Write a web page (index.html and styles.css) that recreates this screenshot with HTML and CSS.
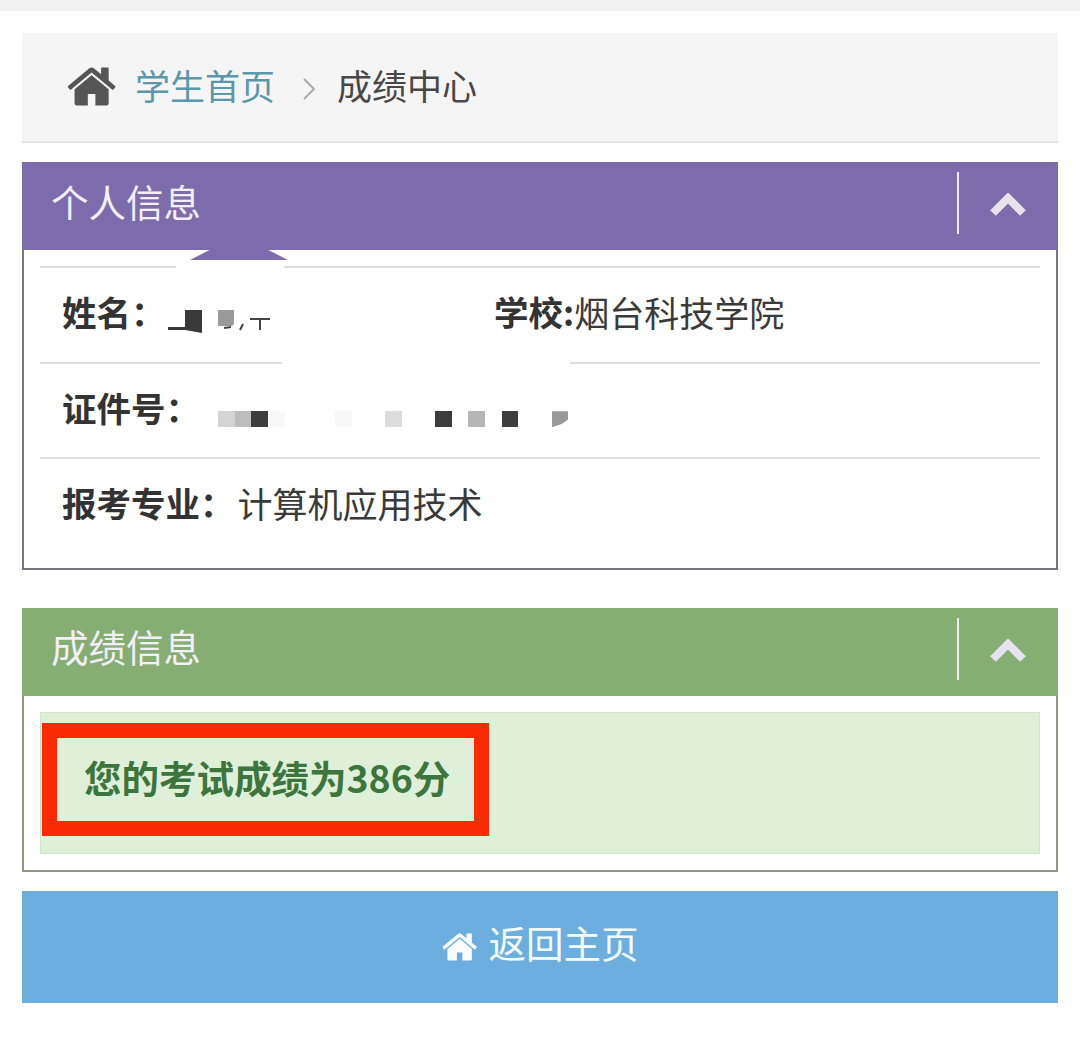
FILE: index.html
```html
<!DOCTYPE html>
<html lang="zh-CN">
<head>
<meta charset="utf-8">
<title>成绩中心</title>
<link rel="stylesheet" href="styles.css">
</head>
<body>
<svg class="defs" width="0" height="0" aria-hidden="true">
  <symbol id="home" viewBox="0 0 1792 1792"><path d="M1408 992v480q0 26-19 45t-45 19h-384v-384h-256v384h-384q-26 0-45-19t-19-45v-480q0-1 .5-3t.5-3l575-474 575 474q1 2 1 6zm223-69l-62 74q-8 9-21 11h-3q-13 0-21-7l-692-577-692 577q-12 8-24 7-13-2-21-11l-62-74q-8-10-7-23.500t11-21.500l719-599q32-26 76-26t76 26l244 204v-195q0-14 9-23t23-9h192q14 0 23 9t9 23v408l219 182q10 8 11 21.500t-7 23.500z"/></symbol>
  <symbol id="chev" viewBox="0 0 36 24"><path d="M3 20 18 5l15 15" fill="none" stroke="currentColor" stroke-width="8"/></symbol>
</svg>
<div class="topstrip"></div>
<main class="page">
  <nav class="crumb">
    <svg class="crumb-icon"><use href="#home"/></svg>
    <a class="crumb-link">学生首页</a>
    <svg class="crumb-sep" viewBox="0 0 14 24"><path d="M2 2l10 10L2 22" fill="none" stroke="currentColor" stroke-width="2"/></svg>
    <span class="crumb-here">成绩中心</span>
  </nav>

  <section class="panel panel-purple">
    <header class="panel-head">
      <h2 class="panel-title">个人信息</h2>
      <span class="panel-divider"></span>
      <svg class="panel-chev"><use href="#chev"/></svg>
    </header>
    <div class="bump"></div>
    <div class="patch patch-a"></div>
    <div class="patch patch-b"></div>
    <div class="panel-body">
      <div class="row row-two">
        <div class="cell"><b class="label">姓名：</b>
          <svg class="name-mask" viewBox="0 0 110 30" width="110" height="30">
            <path fill="#3a3a3a" d="M0 19h17V2h17v23l-17-3H0z"/>
            <path fill="#9a9a9a" d="M50 2h16v14l-2 2H50z"/>
            <path fill="none" stroke="#444" stroke-width="2" d="M56 20l7-1M72 22l3-6M82 11h20M92 11v11"/>
          </svg>
        </div>
        <div class="cell"><b class="label">学校:</b>烟台科技学院</div>
      </div>
      <div class="row">
        <div class="cell"><b class="label">证件号：</b>
          <span class="id-mask">
            <i class="m m1"></i><i class="m m2"></i><i class="m m3"></i><i class="m m4"></i><i class="m"></i><i class="m"></i><i class="m"></i><i class="m m4"></i><i class="m"></i><i class="m"></i><i class="m m5"></i><i class="m"></i><i class="m"></i><i class="m m3"></i><i class="m"></i><i class="m m6"></i><i class="m"></i><i class="m m3"></i><i class="m"></i><i class="m"></i><i class="m m7"></i>
          </span>
        </div>
      </div>
      <div class="row row-major">
        <div class="cell"><b class="label">报考专业：</b>计算机应用技术</div>
      </div>
    </div>
  </section>

  <section class="panel panel-green">
    <header class="panel-head">
      <h2 class="panel-title">成绩信息</h2>
      <span class="panel-divider"></span>
      <svg class="panel-chev"><use href="#chev"/></svg>
    </header>
    <div class="panel-body-green">
      <div class="alert">
        <strong class="alert-text">您的考试成绩为386分</strong>
        <div class="red-box"></div>
      </div>
    </div>
  </section>

  <a class="back-btn"><svg class="back-icon"><use href="#home"/></svg><span class="back-text">返回主页</span></a>
</main>
</body>
</html>
```
FILE: styles.css
```css
* { box-sizing: border-box; }
html, body { margin: 0; padding: 0; }
body {
  background: #fff;
  color: #333;
  font-family: "Noto Sans CJK SC", "Noto Sans", sans-serif;
  height: 1047px;
  overflow: hidden;
}
.defs { position: absolute; }
.topstrip { height: 11px; background: #f0f0f0; }
.page { padding: 22px 22px 0; display: flex; flex-direction: column; }

.crumb {
  height: 110px;
  background: #f5f5f5;
  border-bottom: 2px solid #e6e6e6;
  display: flex;
  align-items: center;
  padding-left: 45px;
  font-size: 35px;
}
.crumb-icon { width: 53px; height: 53px; fill: #555; margin-top: -2px; }
.crumb-link { color: #5b98aa; margin: -6px 0 0 15px; }
.crumb-sep { width: 14px; height: 24px; color: #aaa; margin: 4px 0 0 27px; }
.crumb-here { color: #484848; margin: -6px 0 0 21px; }

.panel { position: relative; border: 2px solid #77757f; border-top: 0; }
.panel-purple { margin-top: 19px; height: 408px; }
.panel-green { margin-top: 38px; height: 264px; border-color: #8d9682; }

.panel-head {
  height: 88px;
  margin: 0 -2px;
  display: flex;
  align-items: center;
  padding: 0 29px;
  color: #f3eff8;
}
.panel-purple .panel-head { background: #7d6cab; }
.panel-green .panel-head { background: #86ad72; }
.panel-title { margin: 0 auto 0 0; font-size: 37.500px; font-weight: 400; line-height: 1; padding-bottom: 10px; }
.panel-green .panel-title { padding-bottom: 12px; }
.panel-divider { width: 2px; height: 62px; background: #f0eaf6; margin: -6px 31px 0 0; }
.panel-chev { width: 36px; height: 24px; color: #e6e2ee; margin-right: 3px; margin-top: -3px; }

.bump {
  position: absolute;
  top: 88px; left: 166px;
  width: 98px; height: 10px;
  background: #7d6cab;
  clip-path: polygon(20% 0, 80% 0, 100% 100%, 0 100%);
}
.patch { position: absolute; background: #fff; height: 6px; }
.patch-a { top: 102px; left: 152px; width: 108px; }
.patch-b { top: 197px; left: 258px; width: 288px; }

.panel-body { padding: 16px 16px 0; }
.row {
  height: 95.500px;
  border-top: 2px solid #dedede;
  padding-left: 22px;
  display: flex;
  align-items: center;
  font-size: 35px;
  color: #3a3a3a;
}
.row-two { display: grid; grid-template-columns: 432px 1fr; }
.cell { display: flex; align-items: center; white-space: nowrap; height: 72px; padding-bottom: 7px; }
.label { font-weight: 700; font-size: 34.500px; color: #333; }
.row-two .cell:first-child .label { width: 106px; }
.row-major .label { margin-right: 3px; }
.name-mask { flex: none; margin: 23px 0 0 0; }
.id-mask { display: flex; margin: 25px 0 0 18px; }
.m { display: block; width: 16.700px; height: 16px; }
.m1 { background: #d4d4d4; }
.m2 { background: #bdbdbd; }
.m3 { background: #3d3d3d; }
.m4 { background: #f8f8f8; }
.m5 { background: #dcdcdc; }
.m6 { background: #b6b6b6; }
.m7 { background: #999; clip-path: polygon(0 0, 100% 0, 100% 50%, 60% 80%, 0 100%); }

.panel-body-green { padding: 16px 16px 0; }
.alert {
  position: relative;
  height: 142px;
  background: #dff0d8;
  border: 1px solid #d5e5cd;
  display: flex;
  align-items: center;
  padding-left: 43px;
}
.alert-text { color: #3c763d; font-size: 37.500px; margin-top: -14px; }
.red-box {
  position: absolute;
  left: 1px; top: 10px;
  width: 447px; height: 113px;
  border: 15px solid #fb2b05;
}

.back-btn {
  margin-top: 19px;
  height: 112px;
  background: #6cafde;
  color: #f4fbff;
  font-size: 37.500px;
  display: flex;
  align-items: center;
  justify-content: center;
}
.back-icon { width: 38px; height: 38px; fill: #f8fcff; margin-right: 9px; }
.back-text { margin-top: -12px; }
```
